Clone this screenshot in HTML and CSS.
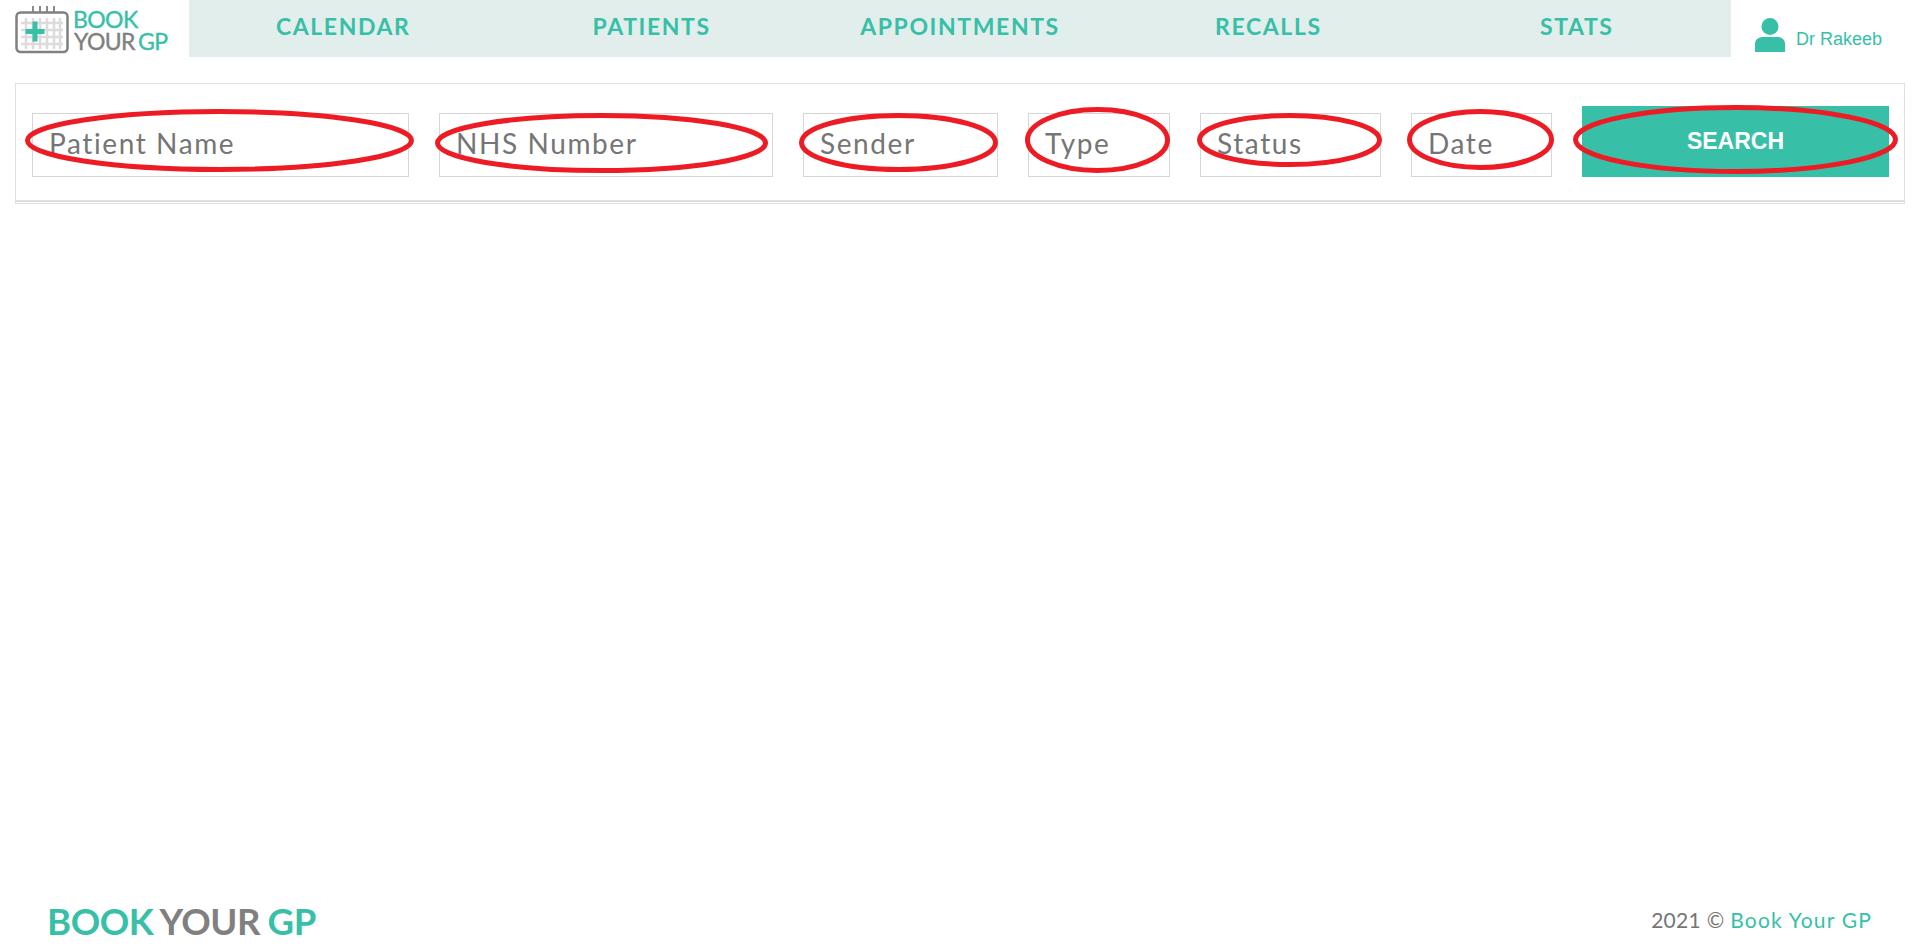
FILE: index.html
```html
<!DOCTYPE html>
<html lang="en">
<head>
  <meta charset="UTF-8" />
  <meta name="viewport" content="width=device-width, initial-scale=1.0"/>
  <title>Book Your GP</title>
  <link rel="stylesheet" href="styles.css">
</head>
<body>

<header class="topbar">
  <a class="brand" href="#">
    <svg class="brand-logo" width="160" height="51" viewBox="0 0 160 51">
      <g stroke="#dcdcdc" stroke-width="2.5">
        <path d="M6 17H48M6 24H48M6 31H48M6 38H48"/>
        <path d="M11 12V43M18 12V43M25 12V43M32 12V43M39 12V43M45 12V43"/>
      </g>
      <rect x="1.500" y="6.500" width="51" height="39.500" rx="4" fill="none" stroke="#808080" stroke-width="2.500"/>
      <path d="M18 0V7M25 0V7M32 0V7M39 0V7" stroke="#808080" stroke-width="1.800"/>
      <path d="M20 15.500V35.500M10.500 25.500H29.500" stroke="#37bfa7" stroke-width="5"/>
      <text class="logo-teal" x="58" y="22">BOOK</text>
      <text class="logo-grey" x="59" y="44">YOUR</text>
      <text class="logo-teal" x="123" y="44">GP</text>
    </svg>
  </a>
  <nav class="mainnav">
    <a href="#">CALENDAR</a>
    <a href="#">PATIENTS</a>
    <a href="#">APPOINTMENTS</a>
    <a href="#">RECALLS</a>
    <a href="#">STATS</a>
  </nav>
  <div class="user">
    <svg width="30" height="34" viewBox="0 0 30 34">
      <circle cx="15" cy="8.500" r="8.500" fill="#37bfa7"/>
      <path d="M0 34V26C0 21 4 19 8 19H22C26 19 30 21 30 26V34Z" fill="#37bfa7"/>
    </svg>
    <span>Dr Rakeeb</span>
  </div>
</header>

<form class="search-card">
  <input class="field f-name" type="text" placeholder="Patient Name">
  <input class="field f-nhs" type="text" placeholder="NHS Number">
  <input class="field f-sender" type="text" placeholder="Sender">
  <input class="field f-type" type="text" placeholder="Type">
  <input class="field f-status" type="text" placeholder="Status">
  <input class="field f-date" type="text" placeholder="Date">
  <button class="search-btn" type="button">SEARCH</button>
</form>

<footer class="footer">
  <div class="footer-logo"><span class="teal">BOOK</span> <span class="grey">YOUR</span> <span class="teal">GP</span></div>
  <div class="copyright">2021 © <a href="#">Book Your GP</a></div>
</footer>

<!-- red rings drawn on top of the screenshot -->
<svg class="rings" width="1920" height="949" viewBox="0 0 1920 949">
  <ellipse cx="219.500" cy="140.500" rx="192" ry="29"/>
  <ellipse cx="601.500" cy="143" rx="164" ry="27.500"/>
  <ellipse cx="898.500" cy="142.500" rx="97" ry="27"/>
  <ellipse cx="1097.500" cy="140" rx="70" ry="30.500"/>
  <ellipse cx="1289.500" cy="140" rx="90" ry="24.500"/>
  <ellipse cx="1480.500" cy="139.500" rx="71" ry="28"/>
  <ellipse cx="1735.500" cy="139.500" rx="160" ry="32"/>
</svg>

</body>
</html>
```

FILE: styles.css
```css
* {
  box-sizing: border-box;
}
body {
  font-family: Lato, "Liberation Sans", sans-serif;
  background-color: #fff;
  margin: 0;
  min-height: 949px;
  display: flex;
  flex-direction: column;
  position: relative;
}
a {
  text-decoration: none;
}
.teal {
  color: #37bfa7;
}
.grey {
  color: #808080;
}

/* header */
.topbar {
  display: flex;
  height: 57px;
}
.brand {
  width: 189px;
  padding: 6px 0 0 15px;
}
.brand-logo {
  display: block;
}
.brand-logo text {
  font-size: 23px;
  letter-spacing: -0.6px;
  stroke-width: 0.4px;
}
.logo-teal {
  fill: #37bfa7;
  stroke: #37bfa7;
}
.logo-grey {
  fill: #808080;
  stroke: #808080;
}
.mainnav {
  width: 1542px;
  background-color: #e2eeeb;
  display: grid;
  grid-template-columns: repeat(5, 1fr);
}
.mainnav a {
  color: #37bfa7;
  font-size: 23px;
  font-weight: 700;
  letter-spacing: 1.6px;
  text-align: center;
  line-height: 52px;
}
.user {
  flex: 1;
  display: flex;
  align-items: flex-end;
  gap: 11px;
  padding: 0 0 5px 24px;
  font-family: "Liberation Sans", Arial, sans-serif;
  font-size: 18px;
  color: #37bfa7;
}
.user span {
  padding-bottom: 2px;
}

/* search */
.search-card {
  margin: 26px 15px 0;
  height: 121px;
  border: 1px solid #e0e0e0;
  box-shadow: inset 0 -1px 0 #fff, inset 0 -3px 0 #e0e0e0;
  padding: 22px 15px 0 16px;
  display: flex;
  align-items: flex-start;
}
.field {
  height: 64px;
  margin-top: 7px;
  border: 1px solid #d6d6d6;
  padding: 0 16px 4px;
  font-family: inherit;
  font-size: 28px;
  letter-spacing: 1.6px;
  outline: none;
  background: #fff;
  flex: none;
}
.field::placeholder {
  color: #757575;
  opacity: 1;
}
.f-name { width: 377px; margin-right: 30px; }
.f-nhs { width: 334px; margin-right: 30px; }
.f-sender { width: 195px; margin-right: 30px; }
.f-type { width: 142px; margin-right: 30px; }
.f-status { width: 181px; margin-right: 30px; }
.f-date { width: 141px; margin-right: 30px; }
.search-btn {
  width: 307px;
  height: 71px;
  border: none;
  background-color: #37bfa7;
  color: #fff;
  font-family: "Liberation Sans", Arial, sans-serif;
  font-size: 23px;
  font-weight: 700;
  padding: 0 0 1px;
}

/* footer */
.footer {
  margin-top: auto;
  height: 50px;
  padding: 0 48px 0 47px;
  display: flex;
  justify-content: space-between;
  align-items: flex-start;
}
.footer-logo {
  font-size: 36.500px;
  font-weight: 700;
  line-height: 44px;
  letter-spacing: -0.4px;
  word-spacing: -1px;
}
.copyright {
  font-size: 21px;
  letter-spacing: 0.3px;
  color: #757575;
  line-height: 42px;
}
.copyright a {
  color: #37bfa7;
  letter-spacing: 1.2px;
}

.rings {
  position: absolute;
  top: 0;
  left: 0;
  pointer-events: none;
}
.rings ellipse {
  fill: none;
  stroke: #ed1c24;
  stroke-width: 5;
}
```
